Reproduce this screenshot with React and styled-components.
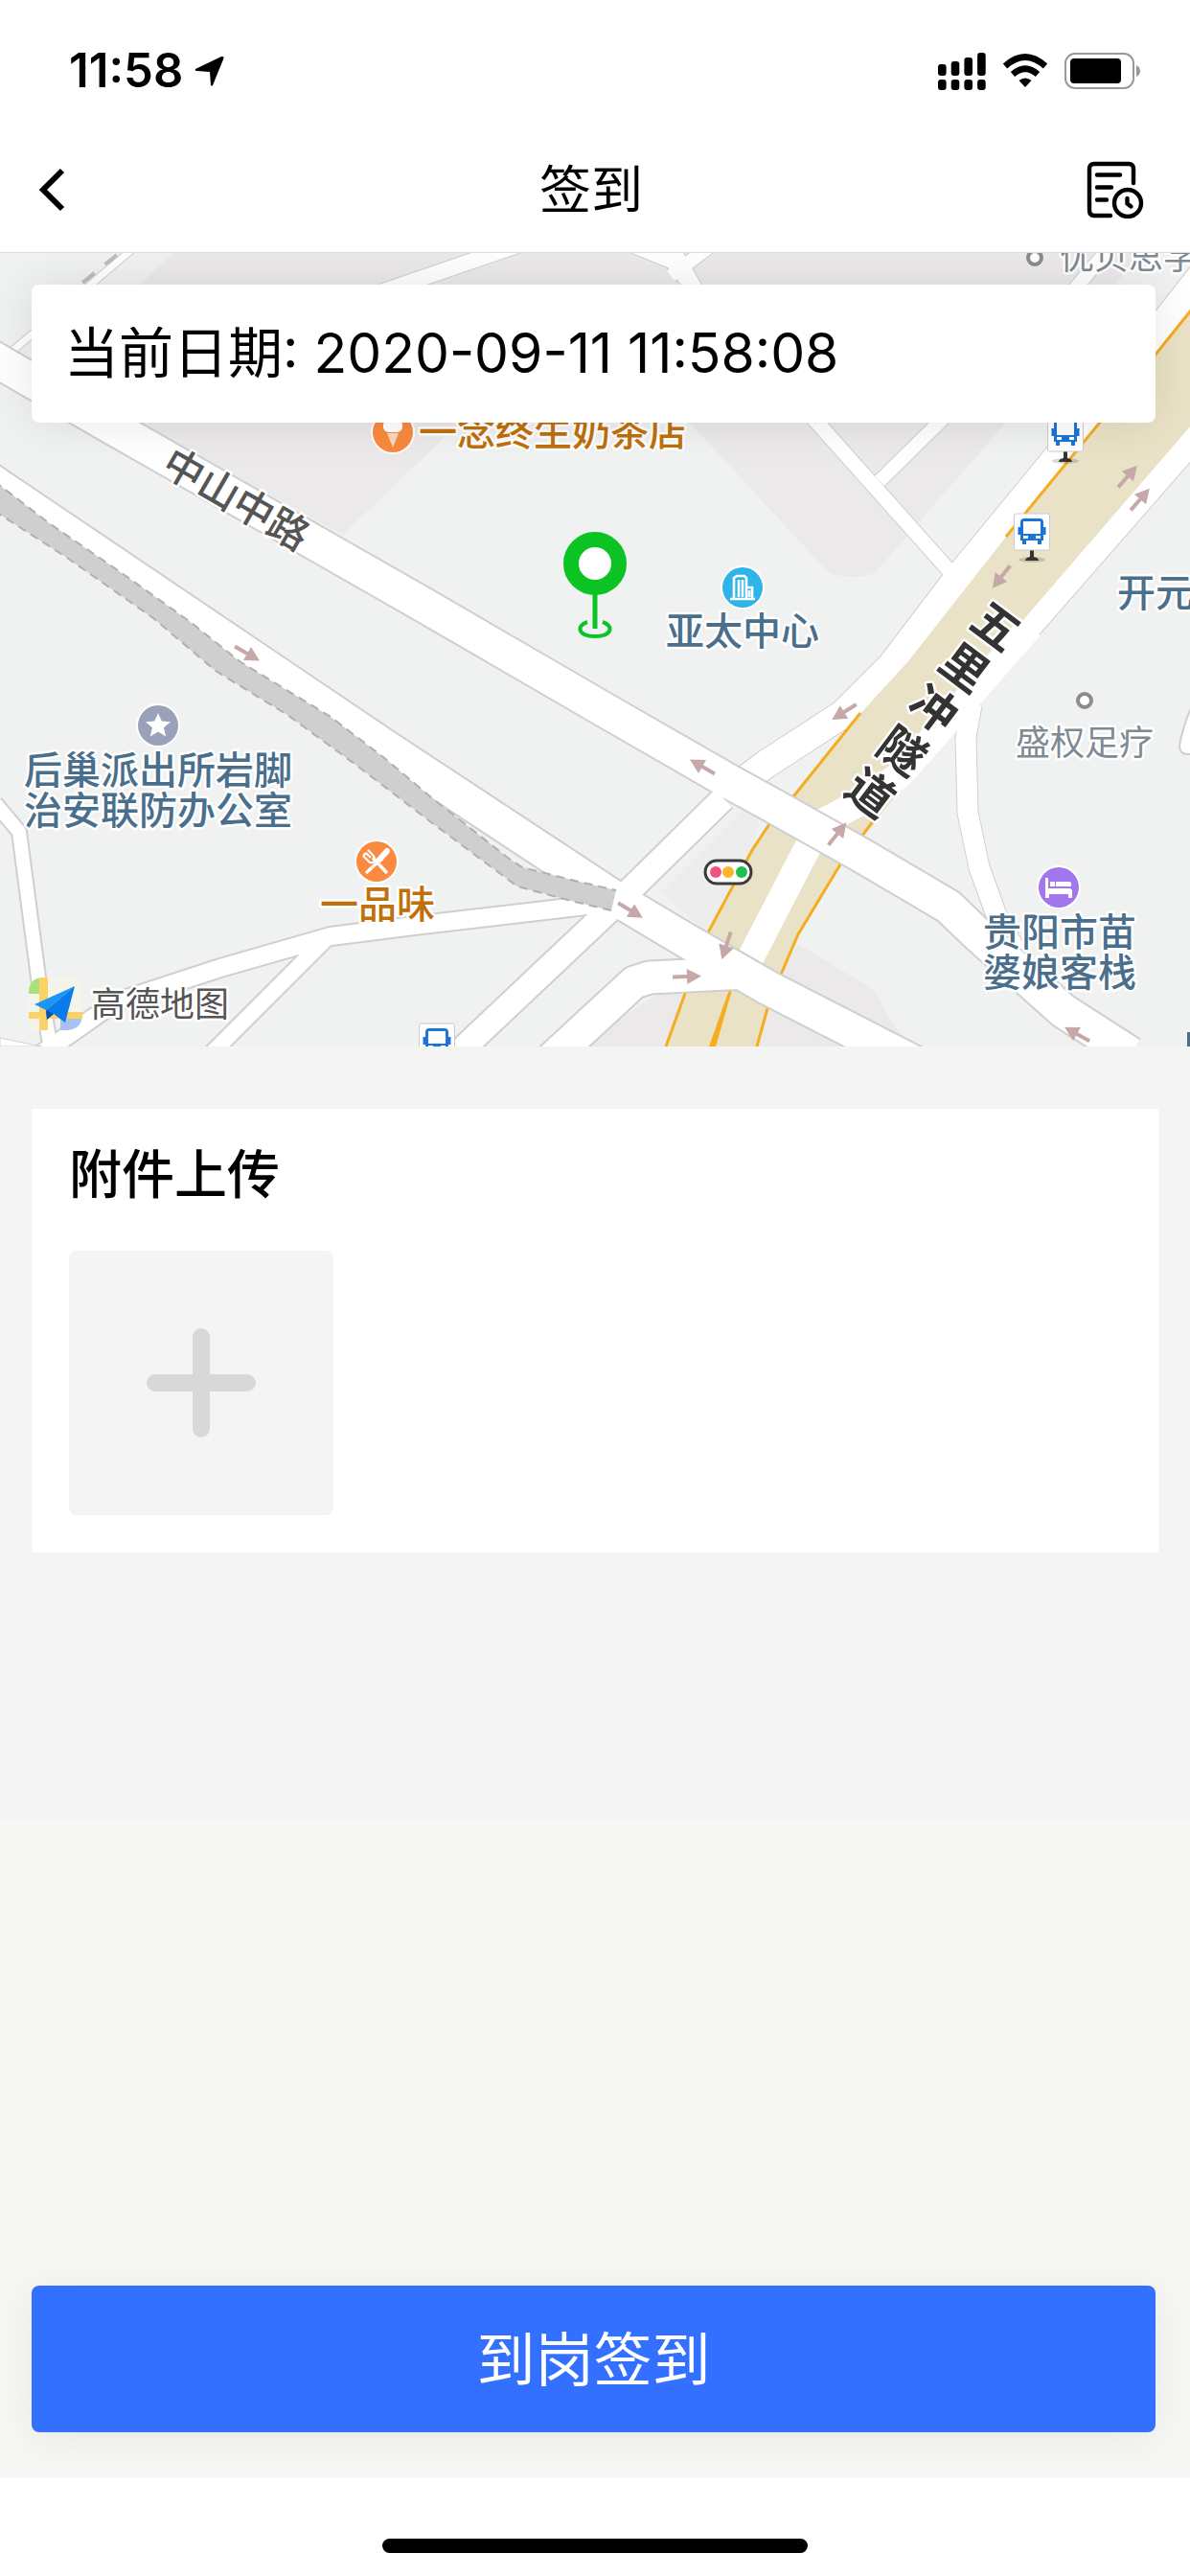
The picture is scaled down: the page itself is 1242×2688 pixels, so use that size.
import React from "react";
import styled, { createGlobalStyle } from "styled-components";

const fontStack = `Inter, "Noto Sans CJK SC", sans-serif`;
const cjkStack = `"Noto Sans CJK SC", sans-serif`;

const GlobalStyle = createGlobalStyle`
  *, *::before, *::after { box-sizing: border-box; }
  body { margin: 0; background: #fff; color: #000; font-family: ${fontStack}; }
  button { margin: 0; padding: 0; border: 0; background: none; font: inherit; color: inherit; cursor: pointer; }
  svg { display: block; }
`;

const Screen = styled.div`
  display: flex;
  flex-direction: column;
  min-height: 100vh;
`;

const StatusBar = styled.div`
  display: flex;
  align-items: center;
  justify-content: space-between;
  height: 132px;
  padding: 16px 51px 0 72px;
`;

const StatusGroup = styled.div`
  display: flex;
  align-items: center;
  gap: ${(p) => p.$gap}px;
`;

const Clock = styled.time`
  font-size: 49px;
  line-height: 56px;
  font-weight: 600;
`;

const NavBar = styled.header`
  display: grid;
  grid-template-columns: 1fr auto 1fr;
  align-items: center;
  height: 132px;
  padding: 0 48px 0 40px;
  border-bottom: 1px solid #dcdcdc;
`;

const NavTitle = styled.h1`
  margin: 0;
  padding-bottom: 6px;
  font-size: 54px;
  line-height: 72px;
  font-weight: 400;
  font-family: ${cjkStack};
`;

const IconButton = styled.button`
  display: flex;
  justify-self: ${(p) => p.$side};
`;

const MapPanel = styled.section`
  position: relative;
  overflow: hidden;
`;

const MapCanvas = styled.svg`
  width: 100%;
  height: auto;
  font-family: ${cjkStack};
`;

const DateCard = styled.div`
  position: absolute;
  top: 33px;
  left: 33px;
  right: 36px;
  display: flex;
  align-items: center;
  height: 144px;
  padding: 0 34px;
  border-radius: 8px;
  background: #fff;
  box-shadow: 0 0 48px rgba(0, 0, 0, 0.1);
  font-size: 57px;
  line-height: 72px;
  white-space: pre;
`;

const UploadSection = styled.section`
  padding: 65px 33px 278px;
  background: #f4f4f4;
`;

const UploadCard = styled.div`
  display: flex;
  flex-direction: column;
  align-items: flex-start;
  gap: 48px;
  padding: 28px 39px 39px;
  background: #fff;
`;

const UploadTitle = styled.h2`
  margin: 0;
  font-size: 55px;
  line-height: 72px;
  font-weight: 500;
  font-family: ${cjkStack};
`;

const AddButton = styled.button`
  display: flex;
  align-items: center;
  justify-content: center;
  width: 276px;
  height: 276px;
  border-radius: 8px;
  background: #f4f4f4;
`;

const Footer = styled.footer`
  display: flex;
  flex: 1;
  align-items: flex-end;
  padding: 48px 36px 48px 33px;
  background: #f7f7f6;
`;

const SubmitButton = styled.button`
  flex: 1;
  height: 153px;
  padding-bottom: 6px;
  border-radius: 8px;
  background: #3370ff;
  box-shadow: 0 6px 48px rgba(0, 0, 0, 0.07);
  color: #fff;
  font-size: 61px;
  line-height: 84px;
  font-family: ${cjkStack};
`;

const HomeArea = styled.div`
  display: flex;
  justify-content: center;
  align-items: flex-end;
  height: 102px;
  padding-bottom: 24px;
  background: #fff;
`;

const HomeIndicator = styled.div`
  width: 444px;
  height: 15px;
  border-radius: 8px;
  background: #000;
`;

const PoiText = styled.text`
  fill: ${(p) => p.$color};
  font-size: ${(p) => p.$size || 40}px;
  font-weight: ${(p) => p.$weight || 500};
  text-anchor: ${(p) => p.$anchor || "start"};
  stroke: #fff;
  stroke-width: 5px;
  stroke-linejoin: round;
  paint-order: stroke;
`;

const Road = styled.polyline`
  fill: none;
  stroke: ${(p) => p.$color};
  stroke-width: ${(p) => p.$width}px;
  stroke-linejoin: round;
`;

const lowerRoads = [
  { pts: "853,441 993,598", w: 15 },
  { pts: "800,380 853,441", w: 15 },
  { pts: "985,436 918,502", w: 14 },
  { pts: "780,812 800,797 880,745 930,695 1000,603 1093,490 1150,420 1260,280", w: 29 },
  { pts: "1260,440 1085,640 985,755 940,805", w: 28 },
  { pts: "1014,735 1008,770 1010,848 1022,905 1040,955 1075,1020", w: 21 },
  { pts: "540,256 400,304", w: 16 },
  { pts: "700,258 726,304", w: 17 },
  { pts: "660,256 702,273 726,304", w: 15 },
  { pts: "745,254 700,288", w: 14 },
  { pts: "1160,256 1118,306", w: 14 },
  { pts: "150,250 0,377", w: 7 },
];

const upperRoads = [
  { pts: "-20,366 0,378 109,441 440,630 640,746 760,815 802,838 900,893 990,946 1018,973 1110,1055 1180,1100", w: 35 },
  { pts: "-20,494 0,508 400,778 640,936 712,979 802,1031 960,1112", w: 35 },
  { pts: "460,1116 640,946 755,833", w: 25 },
  { pts: "570,1110 662,1025 678,1020 780,1015", w: 33 },
  { pts: "40,1102 120,1046 230,1010 345,977 440,965 620,944", w: 18 },
  { pts: "338,982 215,1105", w: 16 },
  { pts: "-5,838 20,868 40,1020 54,1100", w: 14 },
];

const arrows = [
  [258, 682, 30],
  [733, 800, 210],
  [658, 950, 31],
  [758, 987, 108],
  [717, 1019, -2],
  [874, 870, -51],
  [1124, 1079, 209],
  [881, 743, 148],
  [1045, 602, 128],
  [1177, 497, -49],
  [1190, 521, -49],
];

const tunnelName = [
  ["五", 1040, 653],
  ["里", 1007, 696],
  ["冲", 975, 739],
  ["隧", 942, 783],
  ["道", 909, 827],
];

const Roads = ({ list, line = 2 }) => (
  <g>
    {list.map((r) => (
      <Road key={`c${r.pts}`} points={r.pts} $color="#cfcfd0" $width={r.w + line * 2} />
    ))}
    {list.map((r) => (
      <Road key={r.pts} points={r.pts} $color="#fff" $width={r.w} />
    ))}
  </g>
);

const BusStop = ({ x, y }) => (
  <g transform={`translate(${x} ${y})`}>
    <ellipse cx="0" cy="29" rx="14" ry="3" fill="#000" opacity="0.15" />
    <path d="M-2 19h4v7q5 1 5 4h-14q0-3 5-4z" fill="#333" />
    <rect x="-18.5" y="-19" width="37" height="38" rx="2" fill="#fff" stroke="#c9ccd2" strokeWidth="1" />
    <path
      d="M-8-14H8q4 0 4 4V9H10v4H6V9H-6v4h-4V9h-2v-19q0-4 4-4zM-9-11V2H9v-13zM-9 4v3h5V4zM4 4v3h5V4z"
      fill="#1b75d8"
      fillRule="evenodd"
    />
    <path d="M-13-5v8M13-5v8" stroke="#1b75d8" strokeWidth="3" />
  </g>
);

const Poi = ({ x, y, color, children }) => (
  <g transform={`translate(${x} ${y})`}>
    <circle r="23" fill="#fff" />
    <circle r="21" fill={color} />
    {children}
  </g>
);

const BLUE = "#4a6f8c";
const ORANGE = "#c0700a";
const GREY = "#808a92";

const StreetMap = () => (
  <MapCanvas viewBox="0 264 1242 828" role="img" aria-label="地图">
    <rect x="0" y="264" width="1242" height="828" fill="#f0f2f2" />
    <path d="M180 264H1190L1050 441 913 598Q890 606 865 598L720 441 600 340 480 441 358 558 143 441 60 380z" fill="#ebe9ea" />
    <path d="M1050 441L998 592 950 555z" fill="#f0f1f1" />
    <path d="M833 985L912 1033 930 1065 950 1092H600L690 1035 800 1035z" fill="#ebe9ea" />
    <path d="M785 890L738 975 690 930 800 820z" fill="#ededee" />
    <path d="M1250 725Q1236 750 1231 778 1231 787 1240 787H1250z" fill="#fff" stroke="#cfcfd0" strokeWidth="2" />
    <Roads list={lowerRoads} line={1} />
    <path d="M122 266L80 300" stroke="#bdbdbd" strokeWidth="4" strokeDasharray="16 14" />

    <path d="M1250 315L1206 370 1050 560 948 690 893 750 829 830 802 861 785 887 738 975 740 985 712 1040 695 1092H790L812 1020 833 975 877 902 942 822 990 750 1073 641 1250 436z" fill="#eae2c6" />
    <path d="M1075 654L985 757 940 808 900 836 862 856 842 886 783 1000" fill="none" stroke="#fff" strokeWidth="28" />
    <g fill="none" stroke="#f3ad1f" strokeWidth="3">
      <path d="M1250 315L1206 370 1050 560" />
      <path d="M898 744L829 830 803 860 785 887 738 975" />
      <path d="M912 856L877 902 833 975 815 1017" />
      <path d="M716 1034L695 1092M803 1045L790 1092" />
    </g>
    <path d="M761 1033L764 1033 747 1092H740z" fill="#f3ad1f" />

    <Roads list={upperRoads} />
    <path d="M0 1083L44 1092H0z" fill="#fff" stroke="#cfcfd0" strokeWidth="1" />

    <path
      d="M-6 502L50 545 130 600 200 650 250 690 345 748 400 790 450 832 530 895 545 905 600 919 643 929 638 950 600 941 540 925 450 858 370 797 300 746 225 700 160 645 70 582 -6 533z"
      fill="#cfcfcf"
    />
    <path
      d="M-6 502L50 545 130 600 200 650 250 690 345 748 400 790 450 832 530 895 545 905 600 919 643 929M638 950L600 941 540 925 450 858 370 797 300 746 225 700 160 645 70 582 -6 533"
      fill="none"
      stroke="#b0b0b0"
      strokeWidth="2"
      strokeDasharray="9 6"
    />

    {arrows.map(([x, y, a]) => (
      <g key={`${x}-${y}`} transform={`translate(${x} ${y}) rotate(${a})`}>
        <path d="M-15-2H0V-8L15 0 0 8V2H-15z" fill="#c6a8a8" />
      </g>
    ))}

    <PoiText $color="#555" $size={42} $anchor="middle" transform="translate(239 534) rotate(30)">中山中路</PoiText>
    {tunnelName.map(([c, x, y]) => (
      <PoiText key={c} $color="#333" $size={48} $weight={700} $anchor="middle" y="18" transform={`translate(${x} ${y}) rotate(37)`}>
        {c}
      </PoiText>
    ))}

    <BusStop x={1112} y={452} />
    <BusStop x={1077} y={555} />
    <BusStop x={456} y={1087} />

    <g transform="translate(760 910)">
      <rect x="-24" y="-12" width="48" height="24" rx="12" fill="#fff" stroke="#3c3c3c" strokeWidth="3" />
      <circle cx="-13" r="6" fill="#f4527e" />
      <circle r="6" fill="#fbb62b" />
      <circle cx="14" r="6" fill="#1fbf4f" />
    </g>

    <Poi x={410} y={451} color="#f98a3e">
      <path d="M-10-6a6 6 0 0 1 5-7 6 6 0 0 1 10 0 6 6 0 0 1 5 7q0 5-5 6H-5q-5-1-5-6z" fill="#fff" />
      <path d="M-6 1H6L0 16z" fill="#fbd9bd" />
    </Poi>
    <PoiText $color={ORANGE} x="437" y="465">一念终生奶茶店</PoiText>

    <Poi x={775} y={613} color="#2fb4ea">
      <path d="M-13 12H13M-9 12V-10L-6-12H2L4-10V12M4 0H10V12M-4-8V10M0-8V10M7 3v7" fill="none" stroke="#fff" strokeWidth="2.6" />
    </Poi>
    <PoiText $color={BLUE} x="695" y="673">亚太中心</PoiText>
    <PoiText $color={BLUE} x="1166" y="633">开元</PoiText>

    <Poi x={165} y={757} color="#9aa1b9">
      <path d="M0-13L3.8-4.6 13-3.8 6 2.2 8.2 11.5 0 6.6-8.2 11.5-6 2.2-13-3.8-3.8-4.6z" fill="#fff" />
    </Poi>
    <PoiText $color={BLUE}>
      <tspan x="25" y="818">后巢派出所岩脚</tspan>
      <tspan x="25" y="860">治安联防办公室</tspan>
    </PoiText>

    <Poi x={393} y={899} color="#f98a3e">
      <path d="M-4-4L11 12M4-2L-11 12" stroke="#fff" strokeWidth="3.4" />
      <path d="M-14-6L-7 1Q-3 2-2-1T-5-8L-9-12M-11-9L-6-4M-14-6L-11-9" fill="none" stroke="#fff" strokeWidth="2.2" />
      <path d="M3-2L11-11" stroke="#fff" strokeWidth="6" strokeLinecap="round" />
    </Poi>
    <PoiText $color={ORANGE} x="334" y="958">一品味</PoiText>

    <Poi x={1105} y={926} color="#a276ec">
      <path d="M-14-10h3V1H11q3 0 3 3v7H10V7H-10v4h-4zM-9-6h5v5h-5zM-3-6H11q2 0 2 2v3H-3z" fill="#fff" />
    </Poi>
    <PoiText $color={BLUE}>
      <tspan x="1026" y="987">贵阳市苗</tspan>
      <tspan x="1026" y="1029">婆娘客栈</tspan>
    </PoiText>
    <rect x="1239" y="1077" width="3" height="15" fill={BLUE} />

    <circle cx="1080" cy="269" r="7" fill="#fff" stroke="#8c8c8c" strokeWidth="4" />
    <PoiText $color={GREY} $size={36} $weight={400} x="1106" y="281">优贝思学</PoiText>
    <circle cx="1132" cy="731" r="7" fill="#fff" stroke="#8c8c8c" strokeWidth="4" />
    <PoiText $color={GREY} $size={36} $weight={400} x="1060" y="788">盛权足疗</PoiText>

    <g fill="none" stroke="#0bc424">
      <circle cx="621" cy="588" r="25" fill="#fff" strokeWidth="16" />
      <path d="M621 620V656" strokeWidth="5" />
      <path d="M613 649C601 653 603 664 621 664S641 653 629 649" strokeWidth="4" />
    </g>

    <g>
      <path d="M30 1036Q30 1020 46 1020H63V1037H30z" fill="#a9e07c" />
      <path d="M63 1058H86Q86 1075 68 1075H63z" fill="#a9c0f5" />
      <path d="M30 1037H41V1075H36Q30 1075 30 1066zM49 1020H70Q86 1020 86 1036V1056H49z" fill="#f5f4ea" />
      <path d="M41 1020h9v55h-9zM30 1056h56v7H30z" fill="#fbd168" />
      <path d="M78 1029L36 1048 48 1054z" fill="#1d95f7" />
      <path d="M78 1029L48 1054 49 1064 56 1058 68 1067z" fill="#0a7bea" />
      <path d="M48 1054L49 1064 56 1058z" fill="#0b4fa6" />
    </g>
    <PoiText $color="#555" $size={36} $weight={400} x="95" y="1061">高德地图</PoiText>
  </MapCanvas>
);

const LocationArrow = () => (
  <svg width="31" height="31" viewBox="0 0 31 31" aria-hidden="true">
    <path d="M30 0Q31 1 30 3L19 30Q18 31 17 30L16 16 2 15Q0 14 1 13L28 0Q29-1 30 0z" />
  </svg>
);

const Signal = () => (
  <svg width="50" height="39" viewBox="0 0 50 39" aria-hidden="true">
    {[12, 9, 5, 0].map((top, i) => (
      <g key={top}>
        <rect x={i * 13.7} y={top} width="8.6" height={24 - top} rx="3" />
        <rect x={i * 13.7} y="28" width="8.6" height="11" rx="3" />
      </g>
    ))}
  </svg>
);

const Wifi = () => (
  <svg width="48" height="36" viewBox="0 0 48 36" aria-hidden="true">
    <g fill="none" stroke="#000" strokeWidth="6.5">
      <path d="M3 13Q24-6 45 13" />
      <path d="M11 21.500Q24 10 37 21.500" />
    </g>
    <path d="M24 35L17.500 28Q24 23 30.500 28z" />
  </svg>
);

const Battery = () => (
  <svg width="80" height="38" viewBox="0 0 80 38" aria-hidden="true">
    <rect x="1" y="1" width="71" height="36" rx="10" fill="none" stroke="#999" strokeWidth="2" />
    <rect x="6" y="6" width="53" height="26" rx="4" />
    <path d="M75 13Q79 15 79 19T75 25z" fill="#999" />
  </svg>
);

const RecordIcon = () => (
  <svg width="60" height="60" viewBox="0 0 60 60" fill="none" stroke="#000" strokeWidth="4.4" strokeLinecap="round" aria-hidden="true">
    <path d="M49 23V8Q49 3 44 3H8Q3 3 3 8V51Q3 57 8 57H25" />
    <path d="M11 14.500H35M11 27.500H26M11 40.500H21" />
    <circle cx="43" cy="44" r="14" />
    <path d="M42.500 39V44.500L46.500 47.500" />
  </svg>
);

export default function App() {
  return (
    <Screen>
      <GlobalStyle />
      <StatusBar>
        <StatusGroup $gap={12}>
          <Clock>11:58</Clock>
          <LocationArrow />
        </StatusGroup>
        <StatusGroup $gap={17}>
          <Signal />
          <Wifi />
          <Battery />
        </StatusGroup>
      </StatusBar>
      <NavBar>
        <IconButton type="button" aria-label="返回" $side="start">
          <svg width="30" height="48" viewBox="0 0 30 48" fill="none" stroke="#000" strokeWidth="6" aria-hidden="true">
            <path d="M25 4L5 24 25 44" />
          </svg>
        </IconButton>
        <NavTitle>签到</NavTitle>
        <IconButton type="button" aria-label="签到记录" $side="end">
          <RecordIcon />
        </IconButton>
      </NavBar>
      <MapPanel>
        <StreetMap />
        <DateCard>当前日期: 2020-09-11 11:58:08</DateCard>
      </MapPanel>
      <UploadSection>
        <UploadCard>
          <UploadTitle>附件上传</UploadTitle>
          <AddButton type="button" aria-label="添加附件">
            <svg width="114" height="114" viewBox="0 0 114 114" stroke="#d8d8d8" strokeWidth="18" strokeLinecap="round" aria-hidden="true">
              <path d="M57 9V105M9 57H105" />
            </svg>
          </AddButton>
        </UploadCard>
      </UploadSection>
      <Footer>
        <SubmitButton type="button">到岗签到</SubmitButton>
      </Footer>
      <HomeArea>
        <HomeIndicator />
      </HomeArea>
    </Screen>
  );
}
